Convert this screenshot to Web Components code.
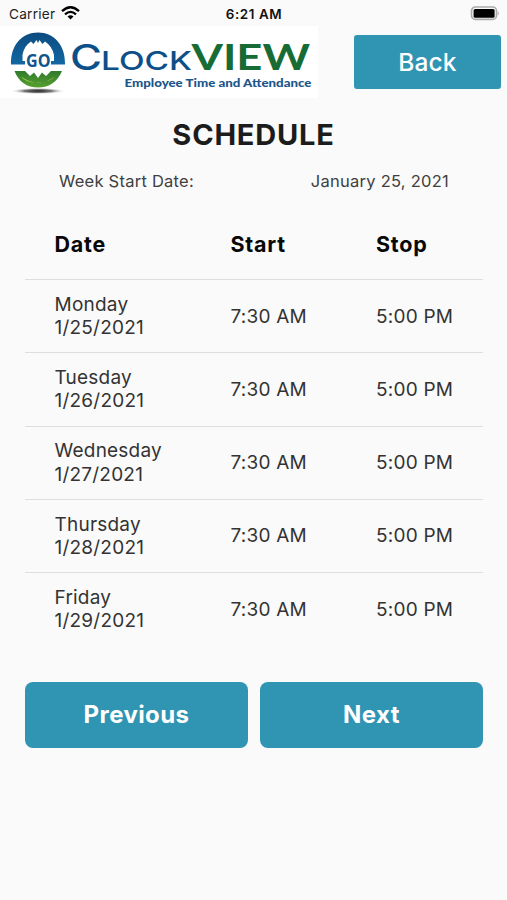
<!DOCTYPE html>
<html lang="en"><head><meta charset="utf-8"><title>Schedule</title>
<style>
html,body{margin:0;height:100%;background:#fafafa}
body{font-family:Inter,"Liberation Sans",sans-serif;color:#333}
</style></head><body>
<schedule-app></schedule-app>
<script>
const define=(name,html)=>customElements.define(name,class extends HTMLElement{
  constructor(){super();this.attachShadow({mode:'open'}).innerHTML=html;}
});

define('status-bar',`<style>
:host{display:grid;grid-template-columns:1fr auto 1fr;align-items:center;height:26px;padding:1px 6px 0 9px;box-sizing:border-box;font-size:13.3px;color:#222}
.l{display:flex;align-items:center;gap:6px}
.l span{font-size:13.6px;letter-spacing:.25px}
b{font-weight:600;font-size:13.4px;color:#111;letter-spacing:.6px;margin-right:2px}
.r{justify-self:end;display:flex}
svg{display:block;margin-top:-1px}
</style>
<span class="l"><span>Carrier</span><svg width="19" height="14" viewBox="0 0 19 14"><g fill="none" stroke="#000" stroke-width="2.3"><path d="M1 5.2Q9.5-2.6 18 5.2"/><path d="M4 8.3Q9.5 3.4 15 8.3"/></g><path d="M9.5 13.5L6.5 10.4Q9.5 8 12.5 10.4Z"/></svg></span>
<b>6:21 AM</b>
<span class="r"><svg width="31" height="15" viewBox="0 0 32 16"><rect x="1.1" y="1.1" width="26.6" height="13.2" rx="4" fill="#fafafa" stroke="#aaa" stroke-width="1.7"/><rect x="3.3" y="3.1" width="22.4" height="9.4" rx="1.6"/><path d="M29 5.2Q31.4 7.7 29 10.2Z" fill="#aaa"/></svg></span>`);

define('clock-logo',`<style>:host{display:block;width:318px;height:72px;background:#fff}svg{display:block}</style>
<svg width="318" height="72" viewBox="0 26 318 72">
<defs><linearGradient id="b" x2="0" y2="1"><stop stop-color="#0c4b80"/><stop offset="1" stop-color="#1268a3"/></linearGradient>
<linearGradient id="g" x2="0" y2="1"><stop stop-color="#2f7a2c"/><stop offset="1" stop-color="#58a02f"/></linearGradient>
<radialGradient id="s"><stop stop-color="#222"/><stop offset=".5" stop-color="#777"/><stop offset="1" stop-color="#fff" stop-opacity="0"/></radialGradient></defs>
<ellipse cx="38" cy="91" rx="28" ry="3.2" fill="url(#s)"/>
<path d="M11 64.500C10.500 45 22 32.500 38 32.500S65.500 45 65 64.500H51V61H54V55Q52 46 45 41.500L42.500 44L39.500 40L38 43L36.500 40L33.500 44L31 41.500Q24 46 22.500 55V61H25V64.500Z" fill="url(#b)"/>
<path d="M14.500 71H25L30 76L34 72.500L38 78L42 72.500L46 76L51 71H62Q55 87.500 38 87.500T14.500 71Z" fill="url(#g)"/>
<path d="M21 76.500Q38 89 55 76.500Q50 82 38 82.500T21 76.500Z" fill="#b5d85b"/>
<text x="26" y="67" font-family="Open Sans,sans-serif" font-weight="700" font-size="17" fill="#12548c" textLength="24.500" lengthAdjust="spacingAndGlyphs">GO</text>
<g font-family="Inter,sans-serif" fill="#0d4f88">
<text x="70" y="70" font-size="35.500" font-weight="500" textLength="32" lengthAdjust="spacingAndGlyphs">C</text>
<text x="101" y="70" font-size="26" font-weight="500" textLength="91" lengthAdjust="spacingAndGlyphs">LOCK</text></g>
<text x="191.500" y="69.700" font-family="Lato,sans-serif" font-size="35.500" font-weight="700" fill="#176b35" textLength="118.500" lengthAdjust="spacingAndGlyphs">VIEW</text>
<text x="124.500" y="87.200" font-family="Lato,sans-serif" font-size="11.500" font-weight="900" fill="#1b568b" textLength="187" lengthAdjust="spacingAndGlyphs">Employee Time and Attendance</text>
</svg>`);

define('action-button',`<style>
:host{display:flex;align-items:center;justify-content:center;background:#3094b3;color:#fff;height:66px;border-radius:8px;font-weight:700;font-size:24px;letter-spacing:.4px;box-sizing:border-box}
:host([compact]){width:147px;height:54px;border-radius:3px;font-weight:500;font-size:24.500px;letter-spacing:.15px}
</style><slot></slot>`);

define('schedule-row',`<style>
:host{display:grid;grid-template-columns:176px 145.500px 1fr;align-items:center;height:73.300px;box-sizing:border-box;padding-left:29.500px;border-top:1.300px solid #dedede;font-size:19px;line-height:23.300px;letter-spacing:.22px;color:#333}
:host([head]){height:70px;padding-top:2px;border:0;font-weight:700;font-size:21.500px;letter-spacing:.75px;color:#080808}
</style><slot name="date"></slot><slot name="start"></slot><slot name="stop"></slot>`);

const days=[['Monday',25],['Tuesday',26],['Wednesday',27],['Thursday',28],['Friday',29]];
define('schedule-table',`<style>:host{display:block;margin:0 24px 0 25px}</style>
<schedule-row head><span slot="date">Date</span><span slot="start">Start</span><span slot="stop">Stop</span></schedule-row>`+
days.map(([d,n])=>`<schedule-row><span slot="date">${d}<br>1/${n}/2021</span><span slot="start">7:30 AM</span><span slot="stop">5:00 PM</span></schedule-row>`).join(''));

define('schedule-app',`<style>
:host{display:block;height:900px;overflow:hidden;background:#fafafa}
header{display:flex;justify-content:space-between;align-items:flex-start;padding-right:6px}
header action-button{margin-top:9px}
h1{margin:19px 0 0;text-align:center;font-size:29px;line-height:36px;font-weight:700;letter-spacing:.8px;color:#1c1c1c}
.week{display:flex;justify-content:space-between;padding:0 58px 0 59px;margin:18px 0;font-size:16.500px;line-height:20px;letter-spacing:.25px;color:#404040}
nav{display:grid;grid-template-columns:1fr 1fr;gap:12px;margin:36.500px 24px 0 25px}
</style>
<status-bar></status-bar>
<header><clock-logo></clock-logo><action-button compact>Back</action-button></header>
<h1>SCHEDULE</h1>
<div class="week"><span>Week Start Date:</span><span>January 25, 2021</span></div>
<schedule-table></schedule-table>
<nav><action-button>Previous</action-button><action-button>Next</action-button></nav>`);
</script></body></html>
